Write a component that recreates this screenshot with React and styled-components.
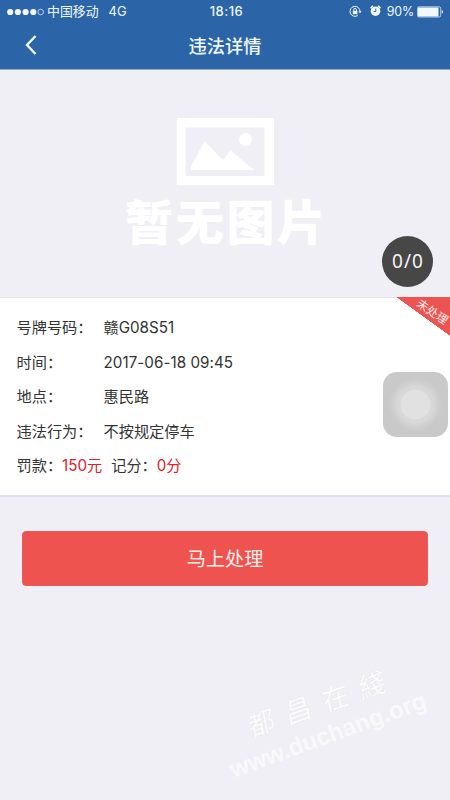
import React from "react";
import styled, { createGlobalStyle } from "styled-components";

const GlobalStyle = createGlobalStyle`
  * {
    box-sizing: border-box;
  }
  body {
    margin: 0;
    background: #f0eff5;
    font-family: Inter, "Noto Sans CJK SC", sans-serif;
  }
`;

const Page = styled.div`
  position: relative;
  display: flex;
  flex-direction: column;
  width: 450px;
  height: 800px;
  overflow: hidden;
  background: #f0eff5;
`;

const Header = styled.header`
  height: 70px;
  background: #2b65a8;
  border-bottom: 1px solid #8aa9ce;
  color: #f1f8ff;
`;

const StatusBar = styled.div`
  display: grid;
  grid-template-columns: 1fr auto 1fr;
  align-items: center;
  height: 23px;
  padding: 0 6px 0 7px;
  font-size: 12.9px;
  line-height: 23px;
  white-space: nowrap;
`;

const Carrier = styled.div`
  display: flex;
  align-items: center;
`;

const Dots = styled.svg`
  width: 38px;
  height: 8px;
  margin-right: 2px;
`;

const Network = styled.span`
  margin-left: 10px;
`;

const Clock = styled.div`
  padding-left: 2px;
  font-size: 13px;
  font-weight: 500;
  letter-spacing: 0.5px;
`;

const StatusRight = styled.div`
  display: flex;
  align-items: center;
  justify-content: flex-end;
  svg {
    display: block;
  }
`;

const StatusIcons = styled.div`
  display: flex;
  gap: 8px;
`;

const Percent = styled.span`
  margin: 0 3px 0 6px;
  font-size: 12.4px;
  letter-spacing: -0.15px;
`;

const NavBar = styled.div`
  display: grid;
  grid-template-columns: 62px 1fr 62px;
  align-items: center;
  height: 46px;
`;

const BackButton = styled.button`
  display: flex;
  align-items: center;
  height: 46px;
  padding: 0 0 2px 25px;
  border: 0;
  background: none;
  color: #f1f8ff;
`;

const Title = styled.h1`
  margin: 0;
  font-size: 18.2px;
  font-weight: 500;
  line-height: 46px;
  text-align: center;
`;

const Photo = styled.section`
  position: relative;
  display: flex;
  flex-direction: column;
  align-items: center;
  height: 227px;
  padding-top: 48px;
`;

const PhotoText = styled.div`
  margin-top: 3px;
  padding-left: 3px;
  color: #fff;
  font-size: 48px;
  font-weight: 900;
  line-height: 70px;
  letter-spacing: 2.7px;
`;

const Counter = styled.div`
  position: absolute;
  top: 166px;
  right: 17px;
  width: 51px;
  height: 51px;
  padding-left: 1px;
  border-radius: 50%;
  background: #474747;
  color: #f4f4f4;
  font-family: "Noto Sans", "Open Sans", sans-serif;
  font-size: 19px;
  line-height: 51px;
  letter-spacing: 1px;
  text-align: center;
`;

const Details = styled.section`
  position: relative;
  height: 200px;
  padding: 13px 17px 14px 16.5px;
  border-top: 1px solid #e6e5ec;
  border-bottom: 2px solid #dfdff0;
  background: #fff;
  color: #333;
`;

const Row = styled.div`
  display: flex;
  height: 34.5px;
  font-size: 15.2px;
  line-height: 34.5px;
  white-space: nowrap;
`;

const Label = styled.span`
  width: ${(props) => props.$width || "87px"};
`;

const Value = styled.span`
  letter-spacing: ${(props) => props.$spacing || "0"};
`;

const Amount = styled.span`
  margin-right: ${(props) => props.$gap || "0"};
  color: #e0202b;
`;

const Ribbon = styled.div`
  position: absolute;
  top: -1px;
  right: 0;
  width: 54px;
  height: 39px;
  background: linear-gradient(to top right, transparent 50%, #ec5452 50.5%);
`;

const RibbonText = styled.span`
  position: absolute;
  top: 6px;
  left: 19px;
  color: #ffe9e6;
  font-size: 11.6px;
  line-height: 18px;
  white-space: nowrap;
  transform: rotate(34deg);
`;

const Submit = styled.button`
  height: 55px;
  margin: 34px 22px 0;
  padding: 1px 0 0;
  border: 1px solid #e35b5c;
  border-radius: 4px;
  background: #ef5350;
  color: #fff0ea;
  font-family: inherit;
  font-size: 19.2px;
  line-height: 52px;
`;

const AssistiveTouch = styled.div`
  position: absolute;
  top: 372px;
  right: 2.5px;
  width: 65px;
  height: 65px;
  border-radius: 14px;
  background: radial-gradient(
    circle,
    #e1e1e1 0 14.5px,
    #d8d8d8 15.5px 18px,
    #d0d0d0 22px,
    #c9c9c9 27px
  );
`;

const Watermark = styled.div`
  position: absolute;
  color: #fff;
  white-space: nowrap;
  transform-origin: center;
`;

const WatermarkName = styled(Watermark)`
  left: 237px;
  top: 687px;
  display: flex;
  gap: 12px;
  width: 160px;
  justify-content: center;
  font-size: 27px;
  line-height: 36px;
  opacity: 0.75;
  text-shadow: 0 0 1px #d5d5dc;
  transform: rotate(-19deg) skewX(-8deg);
`;

const WatermarkSite = styled(Watermark)`
  left: 218px;
  top: 719px;
  width: 220px;
  font-family: "Liberation Sans", Arial, sans-serif;
  font-size: 24px;
  font-weight: 700;
  line-height: 32px;
  text-align: center;
  opacity: 0.65;
  transform: rotate(-20deg);
`;

const SignalDots = () => (
  <Dots viewBox="0 0 38 8">
    {[3.2, 10.9, 18.6, 26.3].map((x) => (
      <circle key={x} cx={x} cy="4" r="3.1" fill="currentColor" />
    ))}
    <circle cx="33.7" cy="4" r="2.8" fill="none" stroke="currentColor" strokeWidth="0.7" />
  </Dots>
);

const LockIcon = () => (
  <svg width="13" height="13" viewBox="0 0 13 13" fill="none" stroke="currentColor">
    <path d="M8.8 10.5A5 5 0 1 1 11 6.5" />
    <path d="M9.3 6.3h3.3L11 8.3z" fill="currentColor" stroke="none" />
    <rect x="3.8" y="5.8" width="4.6" height="3.4" fill="currentColor" stroke="none" />
    <path d="M4.8 6V4.7a1.3 1.3 0 0 1 2.6 0V6" />
  </svg>
);

const AlarmIcon = () => (
  <svg width="11" height="12" viewBox="0 0 11 12" fill="none">
    <circle cx="5.5" cy="6.2" r="4.8" fill="currentColor" />
    <path d="M.5 3.3 2.9.9M10.5 3.3 8.1.9" stroke="currentColor" strokeWidth="1.6" />
    <path d="M5.8 3.6v2.9H3.6" stroke="#2b65a8" strokeWidth="1" />
  </svg>
);

const BatteryIcon = () => (
  <svg width="27" height="12" viewBox="0 0 27 12" fill="none">
    <rect x="0.5" y="0.8" width="23.2" height="10.2" rx="1.6" stroke="currentColor" strokeWidth="0.7" />
    <rect x="1" y="1.4" width="20.5" height="9" rx="0.7" fill="currentColor" />
    <path d="M24.8 4c1.6.5 1.6 3.3 0 3.8z" fill="currentColor" />
  </svg>
);

const NoPhotoIcon = () => (
  <svg width="98" height="67" viewBox="0 0 98 67">
    <path d="M.7 0h97.3v67H.7zM9.5 9.5v48.5h79V9.5z" fill="#fff" fillRule="evenodd" />
    <path d="M15 52v-4L28.5 23.5 47 42l7.5-9.5L78 52z" fill="#fff" />
    <circle cx="69.5" cy="21.5" r="6.5" fill="#fff" />
  </svg>
);

const rows = [
  { label: "号牌号码：", value: "赣G08S51" },
  { label: "时间：", value: "2017-06-18 09:45", spacing: "0.05px" },
  { label: "地点：", value: "惠民路" },
  { label: "违法行为：", value: "不按规定停车" },
];

const App = () => {
  return (
    <Page>
      <GlobalStyle />
      <Header>
        <StatusBar>
          <Carrier>
            <SignalDots />
            中国移动
            <Network>4G</Network>
          </Carrier>
          <Clock>18:16</Clock>
          <StatusRight>
            <StatusIcons>
              <LockIcon />
              <AlarmIcon />
            </StatusIcons>
            <Percent>90%</Percent>
            <BatteryIcon />
          </StatusRight>
        </StatusBar>
        <NavBar>
          <BackButton aria-label="返回">
            <svg width="12" height="20" viewBox="0 0 12 20" fill="none">
              <path d="M10.5 1 2 10l8.5 9" stroke="currentColor" strokeWidth="2.4" />
            </svg>
          </BackButton>
          <Title>违法详情</Title>
        </NavBar>
      </Header>
      <Photo>
        <NoPhotoIcon />
        <PhotoText>暂无图片</PhotoText>
        <Counter>0/0</Counter>
      </Photo>
      <Details>
        {rows.map((row) => (
          <Row key={row.label}>
            <Label>{row.label}</Label>
            <Value $spacing={row.spacing}>{row.value}</Value>
          </Row>
        ))}
        <Row>
          <Label $width="45.5px">罚款：</Label>
          <Amount $gap="9px">150元</Amount>
          <Label $width="45.5px">记分：</Label>
          <Amount>0分</Amount>
        </Row>
        <Ribbon>
          <RibbonText>未处理</RibbonText>
        </Ribbon>
      </Details>
      <Submit>马上处理</Submit>
      <AssistiveTouch />
      <WatermarkName>
        <span>都</span>
        <span>昌</span>
        <span>在</span>
        <span>綫</span>
      </WatermarkName>
      <WatermarkSite>www.duchang.org</WatermarkSite>
    </Page>
  );
};

export default App;
